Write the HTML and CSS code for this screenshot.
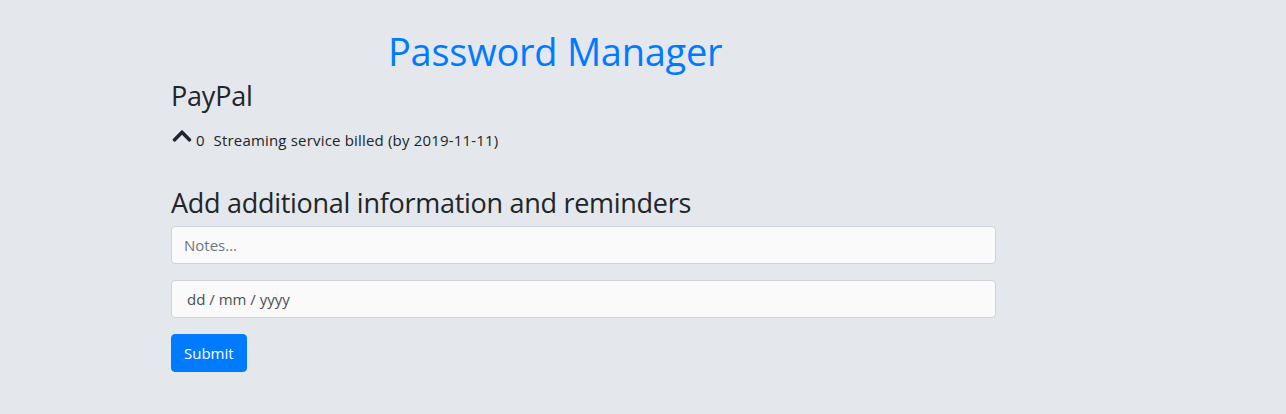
FILE: index.html
```html
<!DOCTYPE html>
<html>
<head>
<meta charset="utf-8">
<link rel="stylesheet" href="styles.css">
</head>
<body>
<div class="page">
  <h1 class="title">Password Manager</h1>
  <h3 class="account">PayPal</h3>
  <div class="reminder">
    <svg class="chev" viewBox="0 0 448 512" width="22" height="22"><path d="M240.971 130.524l194.343 194.343c9.373 9.373 9.373 24.569 0 33.941l-22.667 22.667c-9.357 9.357-24.522 9.375-33.901.04L224 227.495 69.255 381.516c-9.379 9.335-24.544 9.317-33.901-.04l-22.667-22.667c-9.373-9.373-9.373-24.569 0-33.941L207.03 130.525c9.372-9.373 24.568-9.373 33.941-.001z"/></svg>
    <span class="count">0</span>
    <span class="text">Streaming service billed (by 2019-11-11)</span>
  </div>
  <h3 class="section">Add additional information and reminders</h3>
  <form class="form">
    <input class="field" type="text" placeholder="Notes...">
    <div class="field date">dd / mm / yyyy</div>
    <button class="btn" type="button">Submit</button>
  </form>
</div>
</body>
</html>
```
FILE: styles.css
```css
html, body {
  margin: 0;
  padding: 0;
  background: #e4e7eb;
}
body {
  font-family: "Open Sans", "Noto Sans", sans-serif;
  color: #212529;
  font-size: 15px;
}
.page {
  width: 825px;
  padding: 28px 0 0 171px;
  display: flex;
  flex-direction: column;
}
.title {
  margin: 0 0 0 217px;
  font-size: 38px;
  letter-spacing: -0.25px;
  font-weight: 400;
  line-height: 46px;
  color: #007bff;
}
.account {
  margin: 5px 0 0 0;
  font-size: 27px;
  letter-spacing: -0.2px;
  font-weight: 400;
  line-height: 34px;
}
.reminder {
  margin-top: 13px;
  display: flex;
  align-items: flex-end;
  height: 24px;
}
.chev {
  fill: #212529;
  margin-bottom: 3px;
}
.count {
  margin-left: 3px;
  line-height: 20px;
}
.text {
  margin-left: 9px;
  line-height: 20px;
  letter-spacing: 0.18px;
}
.section {
  margin: 36px 0 0 0;
  font-size: 27px;
  letter-spacing: -0.28px;
  font-weight: 400;
  line-height: 34px;
}
.form {
  display: flex;
  flex-direction: column;
  align-items: flex-start;
  margin-top: 6px;
  gap: 16px;
}
.field {
  box-sizing: border-box;
  width: 825px;
  height: 38px;
  background: #fafafa;
  border: 1px solid #ced4da;
  border-radius: 4px;
  padding: 6px 12px;
  font-family: inherit;
  font-size: 15px;
  color: #495057;
  margin: 0;
}
.field::placeholder {
  color: #6c757d;
}
.date {
  display: flex;
  align-items: center;
  padding-left: 15px;
}
.btn {
  height: 38px;
  padding: 0 12px;
  background: #007bff;
  border: 1px solid #007bff;
  border-radius: 4px;
  color: #fff;
  font-family: inherit;
  font-size: 15px;
}
```
